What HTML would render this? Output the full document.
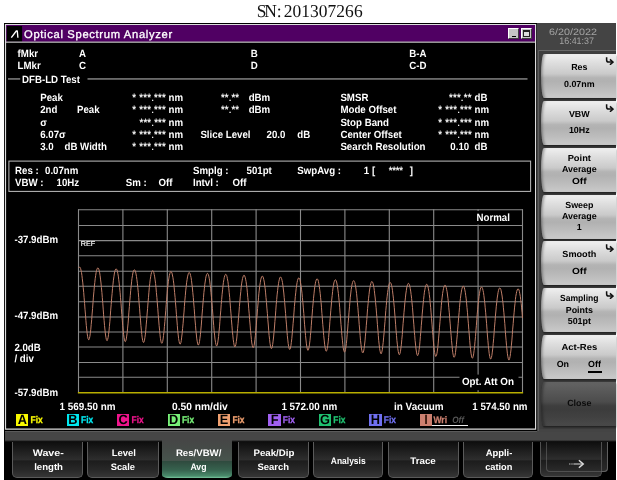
<!DOCTYPE html>
<html><head><meta charset="utf-8"><title>Optical Spectrum Analyzer</title>
<style>
html,body{margin:0;padding:0;background:#fff;}
body{width:617px;height:480px;position:relative;overflow:hidden;font-family:"Liberation Sans",sans-serif;}
.w{position:absolute;left:0;top:0;width:617px;height:500px;background:#fff;filter:blur(0.3px);}
.r{position:absolute;display:block;}
.tx text{white-space:pre;}
</style></head><body><div class="w">
<div class="r" style="left:4.00px;top:23.00px;width:612.00px;height:477.00px;background:#000;"></div>
<div class="r" style="left:537.40px;top:23.00px;width:78.60px;height:418.00px;background:#444;"></div>
<div class="r" style="left:5.00px;top:431.50px;width:611.00px;height:8.50px;background:#464646;"></div>
<div class="r" style="left:5.00px;top:431.30px;width:532.00px;height:1.00px;background:#5a5a5a;"></div>
<div class="r" style="left:5px;top:439.5px;width:611px;height:2.8px;background:linear-gradient(#464646,#000);"></div>
<div class="r" style="left:4px;top:23px;width:533px;height:408px;background:#000;"></div>
<svg class="r" style="left:0;top:0" width="617" height="480" viewBox="0 0 617 480"><rect x="6.0" y="25.0" width="529.2" height="16.8" fill="#500063"/><rect x="6.8" y="26.0" width="15.3" height="15.8" fill="#000"/><rect x="6.0" y="41.6" width="529.2" height="1.1" fill="#d4d4d4"/><path d="M4.9 23.9 H536.2 V429.7 H4.9 Z M6.1 24.9 V428.5 H535.0 V24.9 Z" fill="#dcdcdc" fill-rule="evenodd"/></svg>
<svg class="r" style="left:7px;top:26px;" width="16" height="16" viewBox="0 0 16 16"><path d="M4.3 11.7 L9.3 5.0 L10.3 5.0 L10.9 11.7" fill="none" stroke="#fff" stroke-width="1.35" stroke-linejoin="round" stroke-linecap="butt"/></svg>
<div class="r" style="left:508px;top:28px;width:11.3px;height:11px;background:#c6c6c6;border:1px solid #fff;border-right-color:#404040;border-bottom-color:#404040;box-sizing:border-box;"></div>
<div class="r" style="left:512.00px;top:36.00px;width:4.40px;height:1.40px;background:#000;"></div>
<div class="r" style="left:520.5px;top:28px;width:11.3px;height:11px;background:#c6c6c6;border:1px solid #fff;border-right-color:#404040;border-bottom-color:#404040;box-sizing:border-box;"></div>
<div class="r" style="left:522.8px;top:30px;width:7.2px;height:7.4px;border:1px solid #222;border-top-width:2px;box-sizing:border-box;background:#ddd"></div>
<svg class="r" style="left:0;top:0" width="617" height="480" viewBox="0 0 617 480"><rect x="8" y="78.4" width="12.2" height="1.1" fill="#b0b0b0"/><rect x="87.5" y="78.4" width="440" height="1.1" fill="#b0b0b0"/></svg>
<svg class="r" style="left:0;top:0" width="617" height="480" viewBox="0 0 617 480"><rect x="8.9" y="161.1" width="521.7" height="30.3" fill="none" stroke="#b8b8b8" stroke-width="1.05"/></svg>
<svg class="r" style="left:0;top:0" width="617" height="480" viewBox="0 0 617 480"><line x1="78.50" y1="209.15" x2="78.50" y2="392.75" stroke="#8a8a8a" stroke-width="1.1"/><line x1="122.90" y1="209.15" x2="122.90" y2="392.75" stroke="#8a8a8a" stroke-width="1.1"/><line x1="167.30" y1="209.15" x2="167.30" y2="392.75" stroke="#8a8a8a" stroke-width="1.1"/><line x1="211.70" y1="209.15" x2="211.70" y2="392.75" stroke="#8a8a8a" stroke-width="1.1"/><line x1="256.10" y1="209.15" x2="256.10" y2="392.75" stroke="#8a8a8a" stroke-width="1.1"/><line x1="300.50" y1="209.15" x2="300.50" y2="392.75" stroke="#8a8a8a" stroke-width="1.1"/><line x1="344.90" y1="209.15" x2="344.90" y2="392.75" stroke="#8a8a8a" stroke-width="1.1"/><line x1="389.30" y1="209.15" x2="389.30" y2="392.75" stroke="#8a8a8a" stroke-width="1.1"/><line x1="433.70" y1="209.15" x2="433.70" y2="392.75" stroke="#8a8a8a" stroke-width="1.1"/><line x1="478.10" y1="209.15" x2="478.10" y2="392.75" stroke="#8a8a8a" stroke-width="1.1"/><line x1="522.50" y1="209.15" x2="522.50" y2="392.75" stroke="#8a8a8a" stroke-width="1.1"/><line x1="78.50" y1="209.75" x2="522.50" y2="209.75" stroke="#8a8a8a" stroke-width="1.05"/><line x1="78.50" y1="225.40" x2="522.50" y2="225.40" stroke="#8a8a8a" stroke-width="1.05"/><line x1="78.50" y1="240.60" x2="522.50" y2="240.60" stroke="#8a8a8a" stroke-width="1.05"/><line x1="78.50" y1="255.70" x2="522.50" y2="255.70" stroke="#8a8a8a" stroke-width="1.05"/><line x1="78.50" y1="271.20" x2="522.50" y2="271.20" stroke="#8a8a8a" stroke-width="1.05"/><line x1="78.50" y1="286.30" x2="522.50" y2="286.30" stroke="#8a8a8a" stroke-width="1.05"/><line x1="78.50" y1="301.75" x2="522.50" y2="301.75" stroke="#8a8a8a" stroke-width="1.05"/><line x1="78.50" y1="316.90" x2="522.50" y2="316.90" stroke="#8a8a8a" stroke-width="1.05"/><line x1="78.50" y1="332.00" x2="522.50" y2="332.00" stroke="#8a8a8a" stroke-width="1.05"/><line x1="78.50" y1="347.00" x2="522.50" y2="347.00" stroke="#8a8a8a" stroke-width="1.05"/><line x1="78.50" y1="362.40" x2="522.50" y2="362.40" stroke="#8a8a8a" stroke-width="1.05"/><line x1="78.50" y1="377.30" x2="522.50" y2="377.30" stroke="#8a8a8a" stroke-width="1.05"/><line x1="77.90" y1="392.75" x2="523.10" y2="392.75" stroke="#b8ae00" stroke-width="1.5"/><rect x="474" y="211" width="39" height="13.5" fill="#000"/><rect x="459.5" y="374.6" width="59" height="15.6" fill="#000"/><polyline fill="none" stroke="#be7e68" stroke-width="1.0" stroke-linejoin="round" points="78.8,267.9 79.2,267.2 79.7,267.0 80.1,267.5 80.6,268.5 81.0,270.2 81.5,272.5 81.9,275.3 82.3,278.8 82.8,282.9 83.2,287.4 83.7,292.4 84.1,297.8 84.6,303.4 85.0,309.2 85.5,314.9 85.9,320.3 86.3,325.4 86.8,330.0 87.2,333.8 87.7,336.8 88.1,338.8 88.6,339.7 89.0,339.7 89.4,338.5 89.9,336.3 90.3,333.2 90.8,329.2 91.2,324.6 91.7,319.5 92.1,314.0 92.6,308.3 93.0,302.6 93.4,297.1 93.9,291.8 94.3,286.9 94.8,282.5 95.2,278.7 95.7,275.3 96.1,272.6 96.5,270.5 97.0,269.1 97.4,268.2 97.9,267.9 98.3,268.2 98.8,269.2 99.2,270.7 99.7,272.9 100.1,275.7 100.5,279.1 101.0,283.0 101.4,287.5 101.9,292.4 102.3,297.7 102.8,303.3 103.2,309.1 103.6,314.8 104.1,320.3 104.5,325.4 105.0,330.1 105.4,334.0 105.9,337.2 106.3,339.4 106.8,340.5 107.2,340.6 107.6,339.6 108.1,337.6 108.5,334.7 109.0,330.9 109.4,326.3 109.9,321.3 110.3,315.8 110.7,310.2 111.2,304.5 111.6,298.9 112.1,293.6 112.5,288.7 113.0,284.2 113.4,280.2 113.9,276.8 114.3,274.0 114.7,271.8 115.2,270.2 115.6,269.2 116.1,268.8 116.5,269.1 117.0,269.9 117.4,271.3 117.8,273.4 118.3,276.1 118.7,279.3 119.2,283.2 119.6,287.6 120.1,292.4 120.5,297.7 121.0,303.2 121.4,308.9 121.8,314.6 122.3,320.2 122.7,325.5 123.2,330.2 123.6,334.3 124.1,337.6 124.5,339.9 124.9,341.3 125.4,341.6 125.8,340.8 126.3,338.9 126.7,336.1 127.2,332.5 127.6,328.1 128.1,323.1 128.5,317.7 128.9,312.1 129.4,306.4 129.8,300.8 130.3,295.4 130.7,290.4 131.2,285.8 131.6,281.8 132.0,278.3 132.5,275.3 132.9,273.0 133.4,271.3 133.8,270.2 134.3,269.8 134.7,269.9 135.1,270.6 135.6,271.9 136.0,273.9 136.5,276.5 136.9,279.6 137.4,283.4 137.8,287.6 138.3,292.4 138.7,297.6 139.1,303.1 139.6,308.8 140.0,314.5 140.5,320.1 140.9,325.4 141.4,330.3 141.8,334.5 142.2,337.9 142.7,340.5 143.1,342.0 143.6,342.5 144.0,341.9 144.5,340.2 144.9,337.6 145.4,334.1 145.8,329.8 146.2,324.9 146.7,319.6 147.1,314.0 147.6,308.3 148.0,302.7 148.5,297.3 148.9,292.2 149.3,287.5 149.8,283.3 150.2,279.7 150.7,276.7 151.1,274.3 151.6,272.5 152.0,271.3 152.5,270.7 152.9,270.7 153.3,271.3 153.8,272.6 154.2,274.4 154.7,276.9 155.1,279.9 155.6,283.6 156.0,287.8 156.4,292.5 156.9,297.6 157.3,303.0 157.8,308.7 158.2,314.4 158.7,320.0 159.1,325.4 159.6,330.4 160.0,334.7 160.4,338.3 160.9,341.0 161.3,342.7 161.8,343.3 162.2,342.9 162.7,341.5 163.1,339.0 163.5,335.6 164.0,331.5 164.4,326.7 164.9,321.4 165.3,315.9 165.8,310.2 166.2,304.5 166.7,299.1 167.1,293.9 167.5,289.2 168.0,284.9 168.4,281.2 168.9,278.1 169.3,275.6 169.8,273.7 170.2,272.4 170.6,271.7 171.1,271.6 171.5,272.1 172.0,273.2 172.4,275.0 172.9,277.3 173.3,280.2 173.8,283.8 174.2,287.9 174.6,292.5 175.1,297.5 175.5,302.9 176.0,308.6 176.4,314.3 176.9,320.0 177.3,325.4 177.7,330.4 178.2,334.9 178.6,338.6 179.1,341.4 179.5,343.3 180.0,344.2 180.4,343.9 180.9,342.7 181.3,340.4 181.7,337.1 182.2,333.1 182.6,328.4 183.1,323.3 183.5,317.7 184.0,312.1 184.4,306.4 184.8,300.9 185.3,295.7 185.7,290.9 186.2,286.6 186.6,282.8 187.1,279.5 187.5,276.9 188.0,274.9 188.4,273.5 188.8,272.7 189.3,272.5 189.7,272.9 190.2,273.9 190.6,275.5 191.1,277.7 191.5,280.6 191.9,284.0 192.4,288.0 192.8,292.5 193.3,297.5 193.7,302.9 194.2,308.5 194.6,314.2 195.0,319.9 195.5,325.3 195.9,330.4 196.4,335.0 196.8,338.9 197.3,341.9 197.7,343.9 198.2,345.0 198.6,344.9 199.0,343.8 199.5,341.7 199.9,338.7 200.4,334.8 200.8,330.2 201.3,325.1 201.7,319.6 202.1,314.0 202.6,308.3 203.0,302.8 203.5,297.5 203.9,292.6 204.4,288.2 204.8,284.3 205.3,281.0 205.7,278.2 206.1,276.1 206.6,274.6 207.0,273.7 207.5,273.4 207.9,273.7 208.4,274.6 208.8,276.1 209.2,278.2 209.7,280.9 210.1,284.3 210.6,288.2 211.0,292.6 211.5,297.5 211.9,302.8 212.4,308.4 212.8,314.1 213.2,319.7 213.7,325.3 214.1,330.5 214.6,335.1 215.0,339.1 215.5,342.3 215.9,344.5 216.3,345.7 216.8,345.9 217.2,345.0 217.7,343.0 218.1,340.1 218.6,336.4 219.0,331.9 219.5,326.9 219.9,321.5 220.3,315.9 220.8,310.2 221.2,304.6 221.7,299.3 222.1,294.3 222.6,289.8 223.0,285.8 223.4,282.4 223.9,279.6 224.3,277.3 224.8,275.7 225.2,274.7 225.7,274.3 226.1,274.5 226.6,275.3 227.0,276.7 227.4,278.7 227.9,281.3 228.3,284.5 228.8,288.3 229.2,292.7 229.7,297.5 230.1,302.7 230.5,308.2 231.0,313.9 231.4,319.6 231.9,325.2 232.3,330.5 232.8,335.2 233.2,339.3 233.7,342.7 234.1,345.1 234.5,346.5 235.0,346.8 235.4,346.1 235.9,344.3 236.3,341.6 236.8,338.0 237.2,333.6 237.6,328.7 238.1,323.3 238.5,317.8 239.0,312.1 239.4,306.5 239.9,301.1 240.3,296.1 240.8,291.5 241.2,287.4 241.6,283.9 242.1,280.9 242.5,278.6 243.0,276.9 243.4,275.7 243.9,275.2 244.3,275.3 244.7,276.0 245.2,277.3 245.6,279.2 246.1,281.7 246.5,284.8 247.0,288.5 247.4,292.8 247.8,297.5 248.3,302.7 248.7,308.2 249.2,313.8 249.6,319.5 250.1,325.1 250.5,330.4 251.0,335.3 251.4,339.5 251.8,343.0 252.3,345.6 252.7,347.2 253.2,347.7 253.6,347.2 254.1,345.6 254.5,343.0 254.9,339.6 255.4,335.3 255.8,330.5 256.3,325.2 256.7,319.6 257.2,314.0 257.6,308.4 258.1,302.9 258.5,297.8 258.9,293.2 259.4,289.0 259.8,285.4 260.3,282.3 260.7,279.9 261.2,278.0 261.6,276.8 262.0,276.2 262.5,276.2 262.9,276.7 263.4,277.9 263.8,279.7 264.3,282.1 264.7,285.1 265.2,288.7 265.6,292.9 266.0,297.6 266.5,302.6 266.9,308.1 267.4,313.7 267.8,319.4 268.3,325.0 268.7,330.4 269.1,335.4 269.6,339.7 270.0,343.3 270.5,346.1 270.9,347.9 271.4,348.6 271.8,348.2 272.3,346.8 272.7,344.4 273.1,341.1 273.6,337.0 274.0,332.3 274.5,327.0 274.9,321.5 275.4,315.9 275.8,310.2 276.2,304.8 276.7,299.6 277.1,294.9 277.6,290.6 278.0,286.9 278.5,283.7 278.9,281.2 279.4,279.2 279.8,277.9 280.2,277.1 280.7,277.0 281.1,277.5 281.6,278.6 282.0,280.3 282.5,282.6 282.9,285.5 283.3,289.0 283.8,293.0 284.2,297.6 284.7,302.6 285.1,308.0 285.6,313.6 286.0,319.3 286.5,324.9 286.9,330.4 287.3,335.4 287.8,339.9 288.2,343.6 288.7,346.5 289.1,348.5 289.6,349.4 290.0,349.2 290.4,348.0 290.9,345.8 291.3,342.6 291.8,338.7 292.2,334.0 292.7,328.9 293.1,323.4 293.6,317.8 294.0,312.1 294.4,306.6 294.9,301.4 295.3,296.6 295.8,292.2 296.2,288.4 296.7,285.1 297.1,282.5 297.5,280.4 298.0,279.0 298.4,278.1 298.9,277.9 299.3,278.3 299.8,279.3 300.2,280.8 300.6,283.0 301.1,285.8 301.5,289.2 302.0,293.2 302.4,297.7 302.9,302.6 303.3,307.9 303.8,313.5 304.2,319.2 304.6,324.8 305.1,330.3 305.5,335.4 306.0,340.0 306.4,343.9 306.9,347.0 307.3,349.1 307.7,350.2 308.2,350.2 308.6,349.2 309.1,347.1 309.5,344.1 310.0,340.3 310.4,335.8 310.9,330.7 311.3,325.3 311.7,319.6 312.2,314.0 312.6,308.5 313.1,303.2 313.5,298.3 314.0,293.8 314.4,289.9 314.8,286.6 315.3,283.8 315.7,281.6 316.2,280.1 316.6,279.1 317.1,278.8 317.5,279.1 318.0,279.9 318.4,281.4 318.8,283.5 319.3,286.2 319.7,289.5 320.2,293.3 320.6,297.7 321.1,302.6 321.5,307.8 321.9,313.4 322.4,319.1 322.8,324.7 323.3,330.3 323.7,335.5 324.2,340.1 324.6,344.2 325.1,347.4 325.5,349.7 325.9,350.9 326.4,351.2 326.8,350.3 327.3,348.4 327.7,345.6 328.2,341.9 328.6,337.5 329.0,332.5 329.5,327.1 329.9,321.5 330.4,315.9 330.8,310.3 331.3,305.0 331.7,300.0 332.2,295.5 332.6,291.5 333.0,288.0 333.5,285.2 333.9,282.9 334.4,281.2 334.8,280.2 335.3,279.7 335.7,279.9 336.1,280.7 336.6,282.0 337.0,284.0 337.5,286.6 337.9,289.8 338.4,293.5 338.8,297.8 339.3,302.6 339.7,307.8 340.1,313.3 340.6,318.9 341.0,324.6 341.5,330.2 341.9,335.5 342.4,340.2 342.8,344.4 343.2,347.8 343.7,350.2 344.1,351.7 344.6,352.1 345.0,351.4 345.5,349.7 345.9,347.0 346.4,343.5 346.8,339.2 347.2,334.3 347.7,329.0 348.1,323.4 348.6,317.8 349.0,312.2 349.5,306.8 349.9,301.8 350.3,297.2 350.8,293.0 351.2,289.5 351.7,286.5 352.1,284.1 352.6,282.4 353.0,281.2 353.5,280.7 353.9,280.7 354.3,281.4 354.8,282.6 355.2,284.5 355.7,287.0 356.1,290.1 356.6,293.7 357.0,297.9 357.4,302.6 357.9,307.7 358.3,313.2 358.8,318.8 359.2,324.5 359.7,330.1 360.1,335.4 360.5,340.3 361.0,344.6 361.4,348.1 361.9,350.7 362.3,352.4 362.8,353.0 363.2,352.5 363.7,351.0 364.1,348.5 364.5,345.1 365.0,340.9 365.4,336.1 365.9,330.8 366.3,325.3 366.8,319.6 367.2,314.0 367.6,308.6 368.1,303.5 368.5,298.8 369.0,294.6 369.4,291.0 369.9,287.9 370.3,285.4 370.8,283.6 371.2,282.3 371.6,281.6 372.1,281.6 372.5,282.1 373.0,283.3 373.4,285.0 373.9,287.4 374.3,290.4 374.7,293.9 375.2,298.0 375.6,302.7 376.1,307.7 376.5,313.1 377.0,318.7 377.4,324.4 377.9,330.0 378.3,335.4 378.7,340.4 379.2,344.8 379.6,348.4 380.1,351.2 380.5,353.0 381.0,353.8 381.4,353.5 381.8,352.2 382.3,349.8 382.7,346.6 383.2,342.5 383.6,337.9 384.1,332.7 384.5,327.2 385.0,321.5 385.4,315.9 385.8,310.5 386.3,305.3 386.7,300.5 387.2,296.2 387.6,292.5 388.1,289.3 388.5,286.7 388.9,284.8 389.4,283.4 389.8,282.6 390.3,282.5 390.7,282.9 391.2,283.9 391.6,285.6 392.1,287.9 392.5,290.7 392.9,294.2 393.4,298.2 393.8,302.7 394.3,307.7 394.7,313.0 395.2,318.6 395.6,324.3 396.0,329.9 396.5,335.4 396.9,340.4 397.4,344.9 397.8,348.7 398.3,351.7 398.7,353.7 399.2,354.6 399.6,354.5 400.0,353.4 400.5,351.2 400.9,348.1 401.4,344.2 401.8,339.6 402.3,334.5 402.7,329.0 403.1,323.4 403.6,317.8 404.0,312.3 404.5,307.1 404.9,302.2 405.4,297.9 405.8,294.0 406.3,290.7 406.7,288.0 407.1,286.0 407.6,284.5 408.0,283.6 408.5,283.4 408.9,283.7 409.4,284.6 409.8,286.2 410.2,288.3 410.7,291.1 411.1,294.4 411.6,298.3 412.0,302.8 412.5,307.7 412.9,313.0 413.3,318.5 413.8,324.2 414.2,329.8 414.7,335.3 415.1,340.4 415.6,345.1 416.0,349.0 416.5,352.1 416.9,354.3 417.3,355.4 417.8,355.5 418.2,354.5 418.7,352.5 419.1,349.6 419.6,345.8 420.0,341.3 420.4,336.3 420.9,330.9 421.3,325.3 421.8,319.7 422.2,314.1 422.7,308.9 423.1,304.0 423.6,299.5 424.0,295.6 424.4,292.2 424.9,289.4 425.3,287.2 425.8,285.6 426.2,284.6 426.7,284.3 427.1,284.5 427.5,285.3 428.0,286.8 428.4,288.8 428.9,291.5 429.3,294.7 429.8,298.5 430.2,302.9 430.7,307.7 431.1,312.9 431.5,318.4 432.0,324.1 432.4,329.7 432.9,335.3 433.3,340.5 433.8,345.2 434.2,349.2 434.6,352.5 435.1,354.8 435.5,356.2 436.0,356.4 436.4,355.7 436.9,353.8 437.3,351.1 437.8,347.4 438.2,343.1 438.6,338.1 439.1,332.8 439.5,327.2 440.0,321.6 440.4,316.0 440.9,310.7 441.3,305.7 441.7,301.1 442.2,297.1 442.6,293.6 443.1,290.7 443.5,288.4 444.0,286.8 444.4,285.7 444.9,285.2 445.3,285.3 445.7,286.0 446.2,287.4 446.6,289.3 447.1,291.8 447.5,295.0 448.0,298.7 448.4,303.0 448.8,307.7 449.3,312.8 449.7,318.3 450.2,323.9 450.6,329.6 451.1,335.2 451.5,340.5 452.0,345.3 452.4,349.4 452.8,352.8 453.3,355.4 453.7,356.9 454.2,357.3 454.6,356.7 455.1,355.1 455.5,352.5 455.9,349.0 456.4,344.7 456.8,339.9 457.3,334.6 457.7,329.1 458.2,323.4 458.6,317.9 459.1,312.5 459.5,307.4 459.9,302.8 460.4,298.7 460.8,295.1 461.3,292.1 461.7,289.7 462.2,287.9 462.6,286.7 463.0,286.1 463.5,286.2 463.9,286.8 464.4,288.0 464.8,289.8 465.3,292.3 465.7,295.3 466.2,298.9 466.6,303.1 467.0,307.7 467.5,312.8 467.9,318.2 468.4,323.8 468.8,329.5 469.3,335.1 469.7,340.4 470.1,345.3 470.6,349.6 471.0,353.2 471.5,355.9 471.9,357.6 472.4,358.2 472.8,357.8 473.2,356.3 473.7,353.9 474.1,350.5 474.6,346.4 475.0,341.7 475.5,336.5 475.9,331.0 476.4,325.3 476.8,319.7 477.2,314.3 477.7,309.2 478.1,304.5 478.6,300.3 479.0,296.6 479.5,293.5 479.9,291.0 480.3,289.1 480.8,287.8 481.2,287.1 481.7,287.0 482.1,287.5 482.6,288.6 483.0,290.4 483.5,292.7 483.9,295.6 484.3,299.1 484.8,303.2 485.2,307.8 485.7,312.8 486.1,318.1 486.6,323.7 487.0,329.4 487.4,335.0 487.9,340.4 488.3,345.4 488.8,349.8 489.2,353.5 489.7,356.3 490.1,358.2 490.6,359.0 491.0,358.8 491.4,357.6 491.9,355.3 492.3,352.1 492.8,348.1 493.2,343.4 493.7,338.3 494.1,332.8 494.5,327.2 495.0,321.6 495.4,316.1 495.9,311.0 496.3,306.2 496.8,301.9 497.2,298.1 497.7,294.9 498.1,292.3 498.5,290.3 499.0,288.9 499.4,288.1 499.9,287.9 500.3,288.3 500.8,289.3 501.2,290.9 501.6,293.1 502.1,296.0 502.5,299.4 503.0,303.3 503.4,307.8 503.9,312.8 504.3,318.1 504.8,323.6 505.2,329.3 505.6,334.9 506.1,340.4 506.5,345.4 507.0,350.0 507.4,353.8 507.9,356.8 508.3,358.8 508.7,359.8 509.2,359.8 509.6,358.7 510.1,356.6 510.5,353.6 511.0,349.7 511.4,345.2 511.9,340.1 512.3,334.7 512.7,329.1 513.2,323.5 513.6,318.0 514.1,312.8 514.5,307.9 515.0,303.5 515.4,299.6 515.8,296.3 516.3,293.6 516.7,291.5 517.2,290.0 517.6,289.1 518.1,288.8 518.5,289.1 519.0,290.0 519.4,291.5 519.8,293.6 520.3,296.3 520.7,299.6 521.2,303.5 521.6,307.9 522.1,312.8 522.5,318.0"/></svg>
<div class="r" style="left:16.20px;top:414.00px;width:12.20px;height:11.80px;background:#f8f800;"></div>
<div class="r" style="left:66.65px;top:414.00px;width:12.20px;height:11.80px;background:#00e8f0;"></div>
<div class="r" style="left:117.10px;top:414.00px;width:12.20px;height:11.80px;background:#f0148c;"></div>
<div class="r" style="left:167.55px;top:414.00px;width:12.20px;height:11.80px;background:#78f078;"></div>
<div class="r" style="left:218.00px;top:414.00px;width:12.20px;height:11.80px;background:#f0a070;"></div>
<div class="r" style="left:268.45px;top:414.00px;width:12.20px;height:11.80px;background:#a060f0;"></div>
<div class="r" style="left:318.90px;top:414.00px;width:12.20px;height:11.80px;background:#20c070;"></div>
<div class="r" style="left:369.35px;top:414.00px;width:12.20px;height:11.80px;background:#7070f0;"></div>
<div class="r" style="left:419.80px;top:414.00px;width:12.20px;height:11.80px;background:#cc8070;"></div>
<div class="r" style="left:432.00px;top:424.90px;width:35.50px;height:1.10px;background:#f0f0f0;"></div>
<div class="r" style="left:538.00px;top:49.60px;width:78.00px;height:1.00px;background:#686868;"></div>
<div class="r" style="left:538.00px;top:49.60px;width:1.00px;height:381.00px;background:#5c5c5c;"></div>
<div class="r" style="left:539.00px;top:50.60px;width:77.00px;height:378.00px;background:#3e3e3e;"></div>
<div class="r" style="left:541.4px;top:54.20px;width:74.6px;height:44.0px;background:linear-gradient(#f0f0f0 0%,#dedede 20%,#cacaca 45%,#b4b4b4 54%,#b1b1b1 62%,#bcbcbc 80%,#cacaca 100%);border-radius:3px 0 0 3px / 22px 0 0 22px;box-shadow:0 1.5px 1.5px #222, inset 3px 0 2.5px -1.5px rgba(0,0,0,.3);"></div>
<svg class="r" style="left:604.6px;top:56.80px" width="9" height="8.2" viewBox="0 0 10 9"><path d="M1.8 0.3 V3.2 Q1.8 5.6 4.2 5.6 H8" fill="none" stroke="#111" stroke-width="1.7"/><path d="M5.5 2.6 L8.8 5.6 L5.5 8.6" fill="none" stroke="#111" stroke-width="1.7"/></svg>
<div class="r" style="left:541.4px;top:101.00px;width:74.6px;height:44.0px;background:linear-gradient(#f0f0f0 0%,#dedede 20%,#cacaca 45%,#b4b4b4 54%,#b1b1b1 62%,#bcbcbc 80%,#cacaca 100%);border-radius:3px 0 0 3px / 22px 0 0 22px;box-shadow:0 1.5px 1.5px #222, inset 3px 0 2.5px -1.5px rgba(0,0,0,.3);"></div>
<svg class="r" style="left:604.6px;top:103.60px" width="9" height="8.2" viewBox="0 0 10 9"><path d="M1.8 0.3 V3.2 Q1.8 5.6 4.2 5.6 H8" fill="none" stroke="#111" stroke-width="1.7"/><path d="M5.5 2.6 L8.8 5.6 L5.5 8.6" fill="none" stroke="#111" stroke-width="1.7"/></svg>
<div class="r" style="left:541.4px;top:147.80px;width:74.6px;height:44.0px;background:linear-gradient(#f0f0f0 0%,#dedede 20%,#cacaca 45%,#b4b4b4 54%,#b1b1b1 62%,#bcbcbc 80%,#cacaca 100%);border-radius:3px 0 0 3px / 22px 0 0 22px;box-shadow:0 1.5px 1.5px #222, inset 3px 0 2.5px -1.5px rgba(0,0,0,.3);"></div>
<div class="r" style="left:541.4px;top:194.60px;width:74.6px;height:44.0px;background:linear-gradient(#f0f0f0 0%,#dedede 20%,#cacaca 45%,#b4b4b4 54%,#b1b1b1 62%,#bcbcbc 80%,#cacaca 100%);border-radius:3px 0 0 3px / 22px 0 0 22px;box-shadow:0 1.5px 1.5px #222, inset 3px 0 2.5px -1.5px rgba(0,0,0,.3);"></div>
<div class="r" style="left:541.4px;top:241.40px;width:74.6px;height:44.0px;background:linear-gradient(#f0f0f0 0%,#dedede 20%,#cacaca 45%,#b4b4b4 54%,#b1b1b1 62%,#bcbcbc 80%,#cacaca 100%);border-radius:3px 0 0 3px / 22px 0 0 22px;box-shadow:0 1.5px 1.5px #222, inset 3px 0 2.5px -1.5px rgba(0,0,0,.3);"></div>
<svg class="r" style="left:604.6px;top:244.00px" width="9" height="8.2" viewBox="0 0 10 9"><path d="M1.8 0.3 V3.2 Q1.8 5.6 4.2 5.6 H8" fill="none" stroke="#111" stroke-width="1.7"/><path d="M5.5 2.6 L8.8 5.6 L5.5 8.6" fill="none" stroke="#111" stroke-width="1.7"/></svg>
<div class="r" style="left:541.4px;top:288.00px;width:74.6px;height:44.0px;background:linear-gradient(#f0f0f0 0%,#dedede 20%,#cacaca 45%,#b4b4b4 54%,#b1b1b1 62%,#bcbcbc 80%,#cacaca 100%);border-radius:3px 0 0 3px / 22px 0 0 22px;box-shadow:0 1.5px 1.5px #222, inset 3px 0 2.5px -1.5px rgba(0,0,0,.3);"></div>
<svg class="r" style="left:604.6px;top:290.60px" width="9" height="8.2" viewBox="0 0 10 9"><path d="M1.8 0.3 V3.2 Q1.8 5.6 4.2 5.6 H8" fill="none" stroke="#111" stroke-width="1.7"/><path d="M5.5 2.6 L8.8 5.6 L5.5 8.6" fill="none" stroke="#111" stroke-width="1.7"/></svg>
<div class="r" style="left:541.4px;top:334.80px;width:74.6px;height:44.0px;background:linear-gradient(#f0f0f0 0%,#dedede 20%,#cacaca 45%,#b4b4b4 54%,#b1b1b1 62%,#bcbcbc 80%,#cacaca 100%);border-radius:3px 0 0 3px / 22px 0 0 22px;box-shadow:0 1.5px 1.5px #222, inset 3px 0 2.5px -1.5px rgba(0,0,0,.3);"></div>
<div class="r" style="left:587.50px;top:371.40px;width:14.20px;height:1.30px;background:#000;"></div>
<div class="r" style="left:541.4px;top:381.60px;width:74.6px;height:44.0px;background:linear-gradient(#646464 0%,#585858 22%,#4c4c4c 45%,#3e3e3e 54%,#3c3c3c 62%,#414141 80%,#4a4a4a 100%);border-radius:3px 0 0 3px / 22px 0 0 22px;box-shadow:0 1.5px 1.5px #222, inset 3px 0 2.5px -1.5px rgba(0,0,0,.3);"></div>
<div class="r" style="left:12.00px;top:441.5px;width:70.80px;height:36.2px;background:linear-gradient(#0e0e0e 0%,#202020 28%,#2e2e2e 51%,#1c1c1c 54%,#282828 80%,#363636 100%);border:1px solid #5a5a5a;border-top:none;box-sizing:border-box;border-radius:0 0 5px 5px;"></div>
<div class="r" style="left:87.30px;top:441.5px;width:71.50px;height:36.2px;background:linear-gradient(#0e0e0e 0%,#202020 28%,#2e2e2e 51%,#1c1c1c 54%,#282828 80%,#363636 100%);border:1px solid #5a5a5a;border-top:none;box-sizing:border-box;border-radius:0 0 5px 5px;"></div>
<div class="r" style="left:162.30px;top:439px;width:70.00px;height:38.6px;background:linear-gradient(#464646 0%,#454a47 22%,#47544d 55%,#2f4a3e 57%,#37634f 80%,#4a8c6c 95%,#7ac8a0 100%);border-radius:0 0 6px 6px / 0 0 3px 3px;"></div>
<div class="r" style="left:238.00px;top:441.5px;width:70.60px;height:36.2px;background:linear-gradient(#0e0e0e 0%,#202020 28%,#2e2e2e 51%,#1c1c1c 54%,#282828 80%,#363636 100%);border:1px solid #5a5a5a;border-top:none;box-sizing:border-box;border-radius:0 0 5px 5px;"></div>
<div class="r" style="left:312.60px;top:441.5px;width:70.20px;height:36.2px;background:linear-gradient(#0e0e0e 0%,#202020 28%,#2e2e2e 51%,#1c1c1c 54%,#282828 80%,#363636 100%);border:1px solid #5a5a5a;border-top:none;box-sizing:border-box;border-radius:0 0 5px 5px;"></div>
<div class="r" style="left:388.00px;top:441.5px;width:70.60px;height:36.2px;background:linear-gradient(#0e0e0e 0%,#202020 28%,#2e2e2e 51%,#1c1c1c 54%,#282828 80%,#363636 100%);border:1px solid #5a5a5a;border-top:none;box-sizing:border-box;border-radius:0 0 5px 5px;"></div>
<div class="r" style="left:462.60px;top:441.5px;width:70.00px;height:36.2px;background:linear-gradient(#0e0e0e 0%,#202020 28%,#2e2e2e 51%,#1c1c1c 54%,#282828 80%,#363636 100%);border:1px solid #5a5a5a;border-top:none;box-sizing:border-box;border-radius:0 0 5px 5px;"></div>
<div class="r" style="left:545.8px;top:441.5px;width:62.2px;height:30.2px;background:linear-gradient(#131313,#2a2a2a);border:1px solid #505050;border-top:none;box-sizing:border-box;border-radius:0 0 4px 4px;"></div>
<div class="r" style="left:539.8px;top:441.5px;width:62.2px;height:35.6px;background:linear-gradient(#0e0e0e 0%,#202020 28%,#2e2e2e 51%,#1c1c1c 54%,#282828 80%,#363636 100%);border:1px solid #505050;border-top:none;box-sizing:border-box;border-radius:0 0 5px 5px;"></div>
<div class="r" style="left:545.8px;top:441.5px;width:62.2px;height:30.2px;border:1px solid rgba(110,110,110,.55);border-top:none;box-sizing:border-box;border-radius:0 0 4px 4px;"></div>
<svg class="r" style="left:567.5px;top:459.2px" width="18" height="10" viewBox="0 0 18 10"><path d="M1.2 5 H2.4 M3.4 5 H4.6 M5.4 5 H14.6" stroke="#dcdcdc" stroke-width="1.2" fill="none"/><path d="M10.9 1.3 L15.2 5 L10.9 8.7" stroke="#dcdcdc" stroke-width="1.5" fill="none"/></svg>
<svg class="r tx" style="left:0;top:0" width="617" height="480" viewBox="0 0 617 480"><g font-family="'Liberation Sans', sans-serif" font-weight="700" text-rendering="geometricPrecision">
<text x="272.59 281.74 290.89 300.03 309.18 318.32 327.47 336.61 345.76 354.91 364.05 373.20" y="17" font-family="'Liberation Serif', serif" font-weight="400" font-size="18.2" fill="#111" text-anchor="middle" transform="scale(0.96 1)">SN:201307266</text>
<text x="24.00" y="38" font-size="11.2" fill="#fff" font-weight="400" letter-spacing="0.680" stroke="#fff" stroke-width="0.3">Optical Spectrum Analyzer</text>
<text transform="translate(17.60 57) scale(0.9259 1)" font-size="10.48" fill="#fff">fMkr</text>
<text transform="translate(79.00 57) scale(0.9259 1)" font-size="10.48" fill="#fff">A</text>
<text transform="translate(250.70 57) scale(0.9259 1)" font-size="10.48" fill="#fff">B</text>
<text transform="translate(409.30 57) scale(0.9259 1)" font-size="10.48" fill="#fff">B-A</text>
<text transform="translate(17.60 69) scale(0.9259 1)" font-size="10.48" fill="#fff">LMkr</text>
<text transform="translate(79.00 69) scale(0.9259 1)" font-size="10.48" fill="#fff">C</text>
<text transform="translate(250.70 69) scale(0.9259 1)" font-size="10.48" fill="#fff">D</text>
<text transform="translate(409.30 69) scale(0.9259 1)" font-size="10.48" fill="#fff">C-D</text>
<text transform="translate(22.00 83) scale(0.9259 1)" font-size="10.48" fill="#fff">DFB-LD Test</text>
<text transform="translate(40.20 101) scale(0.9259 1)" font-size="10.48" fill="#fff">Peak</text>
<text transform="translate(40.20 113) scale(0.9259 1)" font-size="10.48" fill="#fff">2nd</text>
<text transform="translate(77.00 113) scale(0.9259 1)" font-size="10.48" fill="#fff">Peak</text>
<text transform="translate(40.20 126) scale(0.9259 1)" font-size="10.48" fill="#fff">σ</text>
<text transform="translate(40.20 138) scale(0.9259 1)" font-size="10.48" fill="#fff">6.07σ</text>
<text transform="translate(40.20 150) scale(0.9259 1)" font-size="10.48" fill="#fff">3.0</text>
<text transform="translate(64.50 150) scale(0.9259 1)" font-size="10.48" fill="#fff">dB Width</text>
<text transform="translate(132.30 101) scale(0.9259 1)" font-size="10.48" fill="#fff" font-weight="400" textLength="36.18" lengthAdjust="spacing" stroke="#fff" stroke-width="0.2">* ***.***</text>
<text transform="translate(168.60 101) scale(0.9259 1)" font-size="10.48" fill="#fff">nm</text>
<text transform="translate(132.30 113) scale(0.9259 1)" font-size="10.48" fill="#fff" font-weight="400" textLength="36.18" lengthAdjust="spacing" stroke="#fff" stroke-width="0.2">* ***.***</text>
<text transform="translate(168.60 113) scale(0.9259 1)" font-size="10.48" fill="#fff">nm</text>
<text transform="translate(132.30 138) scale(0.9259 1)" font-size="10.48" fill="#fff" font-weight="400" textLength="36.18" lengthAdjust="spacing" stroke="#fff" stroke-width="0.2">* ***.***</text>
<text transform="translate(168.60 138) scale(0.9259 1)" font-size="10.48" fill="#fff">nm</text>
<text transform="translate(132.30 150) scale(0.9259 1)" font-size="10.48" fill="#fff" font-weight="400" textLength="36.18" lengthAdjust="spacing" stroke="#fff" stroke-width="0.2">* ***.***</text>
<text transform="translate(168.60 150) scale(0.9259 1)" font-size="10.48" fill="#fff">nm</text>
<text transform="translate(139.50 126) scale(0.9259 1)" font-size="10.48" fill="#fff" font-weight="400" textLength="28.40" lengthAdjust="spacing" stroke="#fff" stroke-width="0.2">***.***</text>
<text transform="translate(168.60 126) scale(0.9259 1)" font-size="10.48" fill="#fff">nm</text>
<text transform="translate(221.00 101) scale(0.9259 1)" font-size="10.48" fill="#fff" font-weight="400" textLength="19.44" lengthAdjust="spacing" stroke="#fff" stroke-width="0.2">**.**</text>
<text transform="translate(248.70 101) scale(0.9259 1)" font-size="10.48" fill="#fff">dBm</text>
<text transform="translate(221.00 113) scale(0.9259 1)" font-size="10.48" fill="#fff" font-weight="400" textLength="19.44" lengthAdjust="spacing" stroke="#fff" stroke-width="0.2">**.**</text>
<text transform="translate(248.70 113) scale(0.9259 1)" font-size="10.48" fill="#fff">dBm</text>
<text transform="translate(200.40 138) scale(0.9259 1)" font-size="10.48" fill="#fff">Slice Level</text>
<text transform="translate(266.50 138) scale(0.9259 1)" font-size="10.48" fill="#fff">20.0</text>
<text transform="translate(297.30 138) scale(0.9259 1)" font-size="10.48" fill="#fff">dB</text>
<text transform="translate(340.40 101) scale(0.9259 1)" font-size="10.48" fill="#fff">SMSR</text>
<text transform="translate(340.40 113) scale(0.9259 1)" font-size="10.48" fill="#fff">Mode Offset</text>
<text transform="translate(340.40 126) scale(0.9259 1)" font-size="10.48" fill="#fff">Stop Band</text>
<text transform="translate(340.40 138) scale(0.9259 1)" font-size="10.48" fill="#fff">Center Offset</text>
<text transform="translate(340.40 150) scale(0.9259 1)" font-size="10.48" fill="#fff">Search Resolution</text>
<text transform="translate(449.00 101) scale(0.9259 1)" font-size="10.48" fill="#fff" font-weight="400" textLength="24.30" lengthAdjust="spacing" stroke="#fff" stroke-width="0.2">***.**</text>
<text transform="translate(474.60 101) scale(0.9259 1)" font-size="10.48" fill="#fff">dB</text>
<text transform="translate(438.30 113) scale(0.9259 1)" font-size="10.48" fill="#fff" font-weight="400" textLength="36.18" lengthAdjust="spacing" stroke="#fff" stroke-width="0.2">* ***.***</text>
<text transform="translate(474.60 113) scale(0.9259 1)" font-size="10.48" fill="#fff">nm</text>
<text transform="translate(438.30 126) scale(0.9259 1)" font-size="10.48" fill="#fff" font-weight="400" textLength="36.18" lengthAdjust="spacing" stroke="#fff" stroke-width="0.2">* ***.***</text>
<text transform="translate(474.60 126) scale(0.9259 1)" font-size="10.48" fill="#fff">nm</text>
<text transform="translate(438.30 138) scale(0.9259 1)" font-size="10.48" fill="#fff" font-weight="400" textLength="36.18" lengthAdjust="spacing" stroke="#fff" stroke-width="0.2">* ***.***</text>
<text transform="translate(474.60 138) scale(0.9259 1)" font-size="10.48" fill="#fff">nm</text>
<text transform="translate(450.30 150) scale(0.9259 1)" font-size="10.48" fill="#fff">0.10</text>
<text transform="translate(474.60 150) scale(0.9259 1)" font-size="10.48" fill="#fff">dB</text>
<text transform="translate(15.00 174) scale(0.9259 1)" font-size="10.48" fill="#fff">Res :</text>
<text transform="translate(45.00 174) scale(0.9259 1)" font-size="10.48" fill="#fff">0.07nm</text>
<text transform="translate(15.00 186) scale(0.9259 1)" font-size="10.48" fill="#fff">VBW :</text>
<text transform="translate(56.50 186) scale(0.9259 1)" font-size="10.48" fill="#fff">10Hz</text>
<text transform="translate(125.80 186) scale(0.9259 1)" font-size="10.48" fill="#fff">Sm :</text>
<text transform="translate(158.50 186) scale(0.9259 1)" font-size="10.48" fill="#fff">Off</text>
<text transform="translate(193.00 174) scale(0.9259 1)" font-size="10.48" fill="#fff">Smplg :</text>
<text transform="translate(246.50 174) scale(0.9259 1)" font-size="10.48" fill="#fff">501pt</text>
<text transform="translate(297.30 174) scale(0.9259 1)" font-size="10.48" fill="#fff">SwpAvg :</text>
<text transform="translate(363.80 174) scale(0.9259 1)" font-size="10.48" fill="#fff">1 [</text>
<text transform="translate(388.70 174) scale(0.9259 1)" font-size="10.48" fill="#fff" font-weight="400" textLength="15.44" lengthAdjust="spacing" stroke="#fff" stroke-width="0.2">****</text>
<text transform="translate(409.80 174) scale(0.9259 1)" font-size="10.48" fill="#fff">]</text>
<text transform="translate(193.00 186) scale(0.9259 1)" font-size="10.48" fill="#fff">Intvl :</text>
<text transform="translate(232.50 186) scale(0.9259 1)" font-size="10.48" fill="#fff">Off</text>
<text transform="translate(476.50 221) scale(0.9259 1)" font-size="10.48" fill="#fff">Normal</text>
<text transform="translate(461.90 385) scale(0.9259 1)" font-size="10.48" fill="#fff" textLength="56.27" lengthAdjust="spacingAndGlyphs">Opt. Att On</text>
<text x="80.80" y="246" font-size="7.2" fill="#fff" font-weight="400" stroke="#fff" stroke-width="0.15">REF</text>
<text transform="translate(14.40 243) scale(0.9259 1)" font-size="10.48" fill="#fff">-37.9dBm</text>
<text transform="translate(14.40 319) scale(0.9259 1)" font-size="10.48" fill="#fff">-47.9dBm</text>
<text transform="translate(14.40 351) scale(0.9259 1)" font-size="10.48" fill="#fff">2.0dB</text>
<text transform="translate(14.40 362) scale(0.9259 1)" font-size="10.48" fill="#fff">/ div</text>
<text transform="translate(14.40 396) scale(0.9259 1)" font-size="10.48" fill="#fff">-57.9dBm</text>
<text transform="translate(59.60 410) scale(0.9259 1)" font-size="10.48" fill="#fff" textLength="60.37" lengthAdjust="spacingAndGlyphs">1 569.50 nm</text>
<text transform="translate(172.00 410) scale(0.9259 1)" font-size="10.48" fill="#fff" textLength="60.16" lengthAdjust="spacingAndGlyphs">0.50 nm/div</text>
<text transform="translate(281.40 410) scale(0.9259 1)" font-size="10.48" fill="#fff" textLength="60.26" lengthAdjust="spacingAndGlyphs">1 572.00 nm</text>
<text transform="translate(394.00 410) scale(0.9259 1)" font-size="10.48" fill="#fff" textLength="53.57" lengthAdjust="spacingAndGlyphs">in Vacuum</text>
<text transform="translate(472.30 410) scale(0.9259 1)" font-size="10.48" fill="#fff" textLength="59.62" lengthAdjust="spacingAndGlyphs">1 574.50 nm</text>
<text transform="translate(22.30 424) scale(0.9615 1)" font-size="13.31" fill="#000" text-anchor="middle">A</text>
<text transform="translate(30.60 423) scale(0.8621 1)" font-size="9.74" fill="#f8f800" stroke="#f8f800" stroke-width="0.3">Fix</text>
<text transform="translate(72.75 424) scale(0.9615 1)" font-size="13.31" fill="#000" text-anchor="middle">B</text>
<text transform="translate(81.05 423) scale(0.8621 1)" font-size="9.74" fill="#00e8f0" stroke="#00e8f0" stroke-width="0.3">Fix</text>
<text transform="translate(123.20 424) scale(0.9615 1)" font-size="13.31" fill="#000" text-anchor="middle">C</text>
<text transform="translate(131.50 423) scale(0.8621 1)" font-size="9.74" fill="#f0148c" stroke="#f0148c" stroke-width="0.3">Fix</text>
<text transform="translate(173.65 424) scale(0.9615 1)" font-size="13.31" fill="#000" text-anchor="middle">D</text>
<text transform="translate(181.95 423) scale(0.8621 1)" font-size="9.74" fill="#78f078" stroke="#78f078" stroke-width="0.3">Fix</text>
<text transform="translate(224.10 424) scale(0.9615 1)" font-size="13.31" fill="#000" text-anchor="middle">E</text>
<text transform="translate(232.40 423) scale(0.8621 1)" font-size="9.74" fill="#f0a070" stroke="#f0a070" stroke-width="0.3">Fix</text>
<text transform="translate(274.55 424) scale(0.9615 1)" font-size="13.31" fill="#000" text-anchor="middle">F</text>
<text transform="translate(282.85 423) scale(0.8621 1)" font-size="9.74" fill="#a060f0" stroke="#a060f0" stroke-width="0.3">Fix</text>
<text transform="translate(325.00 424) scale(0.9615 1)" font-size="13.31" fill="#000" text-anchor="middle">G</text>
<text transform="translate(333.30 423) scale(0.8621 1)" font-size="9.74" fill="#20c070" stroke="#20c070" stroke-width="0.3">Fix</text>
<text transform="translate(375.45 424) scale(0.9615 1)" font-size="13.31" fill="#000" text-anchor="middle">H</text>
<text transform="translate(383.75 423) scale(0.8621 1)" font-size="9.74" fill="#7070f0" stroke="#7070f0" stroke-width="0.3">Fix</text>
<text transform="translate(425.90 424) scale(0.9615 1)" font-size="13.31" fill="#3a1a10" text-anchor="middle">I</text>
<text transform="translate(433.40 423) scale(0.8929 1)" font-size="9.63" fill="#cc8070" stroke="#cc8070" stroke-width="0.25">Wri</text>
<text transform="translate(452.20 423) scale(0.8929 1)" font-size="9.18" fill="#555" font-style="italic">Off</text>
<text x="573.00" y="35" font-size="9.4" fill="#a4a4a4" font-weight="400" text-anchor="middle" textLength="48.00" lengthAdjust="spacingAndGlyphs">6/20/2022</text>
<text x="576.60" y="44" font-size="9.4" fill="#a4a4a4" font-weight="400" text-anchor="middle" textLength="34.70" lengthAdjust="spacingAndGlyphs">16:41:37</text>
<text x="579.30" y="70" font-size="8.9" fill="#000" text-anchor="middle">Res</text>
<text x="579.30" y="87" font-size="8.9" fill="#000" text-anchor="middle">0.07nm</text>
<text x="579.30" y="117" font-size="8.9" fill="#000" text-anchor="middle">VBW</text>
<text x="579.30" y="133" font-size="8.9" fill="#000" text-anchor="middle">10Hz</text>
<text x="579.30" y="161" font-size="8.9" fill="#000" text-anchor="middle" textLength="23.30" lengthAdjust="spacingAndGlyphs">Point</text>
<text x="579.30" y="172" font-size="8.9" fill="#000" text-anchor="middle" textLength="34.80" lengthAdjust="spacingAndGlyphs">Average</text>
<text x="579.30" y="184" font-size="8.9" fill="#000" text-anchor="middle" textLength="14.60" lengthAdjust="spacingAndGlyphs">Off</text>
<text x="579.30" y="208" font-size="8.9" fill="#000" text-anchor="middle">Sweep</text>
<text x="579.30" y="219" font-size="8.9" fill="#000" text-anchor="middle" textLength="34.80" lengthAdjust="spacingAndGlyphs">Average</text>
<text x="579.30" y="230" font-size="8.9" fill="#000" text-anchor="middle">1</text>
<text x="579.30" y="257" font-size="8.9" fill="#000" text-anchor="middle" textLength="33.90" lengthAdjust="spacingAndGlyphs">Smooth</text>
<text x="579.30" y="274" font-size="8.9" fill="#000" text-anchor="middle" textLength="14.60" lengthAdjust="spacingAndGlyphs">Off</text>
<text x="579.30" y="301" font-size="8.9" fill="#000" text-anchor="middle" textLength="38.50" lengthAdjust="spacingAndGlyphs">Sampling</text>
<text x="579.30" y="313" font-size="8.9" fill="#000" text-anchor="middle">Points</text>
<text x="579.30" y="324" font-size="8.9" fill="#000" text-anchor="middle">501pt</text>
<text x="579.30" y="350" font-size="8.9" fill="#000" text-anchor="middle" textLength="35.80" lengthAdjust="spacingAndGlyphs">Act-Res</text>
<text x="562.80" y="367" font-size="8.9" fill="#000" text-anchor="middle">On</text>
<text x="594.50" y="367" font-size="8.9" fill="#000" text-anchor="middle">Off</text>
<text x="579.30" y="406" font-size="8.9" fill="#0c0c0c" text-anchor="middle" textLength="24.30" lengthAdjust="spacingAndGlyphs">Close</text>
<text x="32.70" y="456" font-size="9.4" fill="#fff" textLength="31.10" lengthAdjust="spacingAndGlyphs">Wave-</text>
<text x="34.20" y="470" font-size="9.4" fill="#fff" textLength="28.80" lengthAdjust="spacingAndGlyphs">length</text>
<text x="111.70" y="456" font-size="9.4" fill="#fff" textLength="24.20" lengthAdjust="spacingAndGlyphs">Level</text>
<text x="110.70" y="470" font-size="9.4" fill="#fff" textLength="24.30" lengthAdjust="spacingAndGlyphs">Scale</text>
<text x="175.90" y="456" font-size="9.4" fill="#fff" textLength="45.50" lengthAdjust="spacingAndGlyphs">Res/VBW/</text>
<text x="190.40" y="470" font-size="9.4" fill="#fff" textLength="16.10" lengthAdjust="spacingAndGlyphs">Avg</text>
<text x="253.50" y="456" font-size="9.4" fill="#fff" textLength="40.90" lengthAdjust="spacingAndGlyphs">Peak/Dip</text>
<text x="257.40" y="470" font-size="9.4" fill="#fff" textLength="31.60" lengthAdjust="spacingAndGlyphs">Search</text>
<text x="330.80" y="464" font-size="9.4" fill="#fff" textLength="34.80" lengthAdjust="spacingAndGlyphs">Analysis</text>
<text x="410.30" y="464" font-size="9.4" fill="#fff" textLength="25.50" lengthAdjust="spacingAndGlyphs">Trace</text>
<text x="485.70" y="456" font-size="9.4" fill="#fff" textLength="26.70" lengthAdjust="spacingAndGlyphs">Appli-</text>
<text x="485.20" y="470" font-size="9.4" fill="#fff" textLength="27.20" lengthAdjust="spacingAndGlyphs">cation</text>
</g></svg>
</div></body></html>
